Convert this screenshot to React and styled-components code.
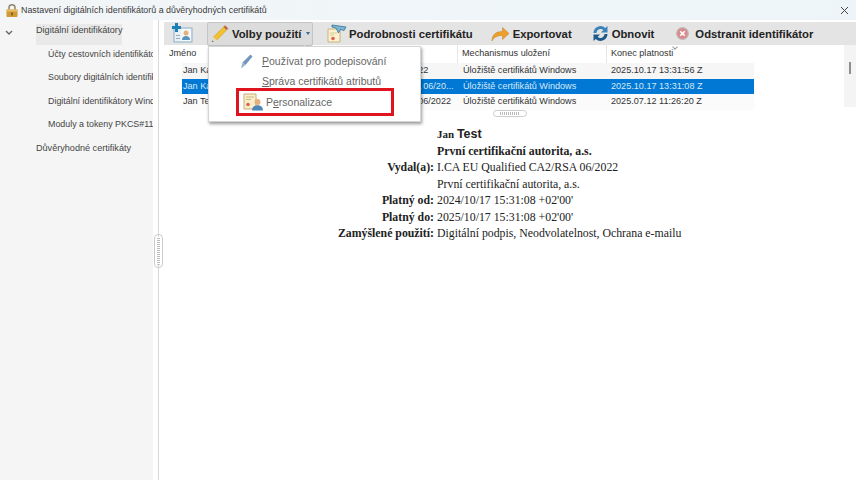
import React from 'react';
import styled, { createGlobalStyle } from 'styled-components';

const rows = [
  { name: 'Jan Kadlec', issuer: 'I.CA Qualified CA2/RSA 2022', store: 'Úložiště certifikátů Windows', end: '2025.10.17 13:31:56 Z', tone: '#f6f6f6' },
  { name: 'Jan Kadlec', issuer: 'I.CA EU Qualified CA2/RSA 06/20...', store: 'Úložiště certifikátů Windows', end: '2025.10.17 13:31:08 Z', selected: true },
  { name: 'Jan Test', issuer: 'I.CA EU Qualified CA/RSA 06/2022', store: 'Úložiště certifikátů Windows', end: '2025.07.12 11:26:20 Z', tone: '#fbfbfb' },
];

const details = [
  { label: 'Vydal(a):', value: 'I.CA EU Qualified CA2/RSA 06/2022' },
  { label: '', value: 'První certifikační autorita, a.s.' },
  { label: 'Platný od:', value: "2024/10/17 15:31:08 +02'00'" },
  { label: 'Platný do:', value: "2025/10/17 15:31:08 +02'00'" },
  { label: 'Zamýšlené použití:', value: 'Digitální podpis, Neodvolatelnost, Ochrana e-mailu' },
];

const App = () => (
  <>
    <GlobalStyle />
    <Page>
      <TitleBar>
        <LockIcon />
        <TitleText>Nastavení digitálních identifikátorů a důvěryhodných certifikátů</TitleText>
        <CloseIcon />
      </TitleBar>
      <Body>
        <Sidebar>
          <Chevron />
          <TreeItem $selected>Digitální identifikátory</TreeItem>
          <TreeItem $child>Účty cestovních identifikátorů</TreeItem>
          <TreeItem $child>Soubory digitálních identifikátorů</TreeItem>
          <TreeItem $child>Digitální identifikátory Windows</TreeItem>
          <TreeItem $child>Moduly a tokeny PKCS#11</TreeItem>
          <TreeItem>Důvěryhodné certifikáty</TreeItem>
        </Sidebar>
        <Splitter>
          <SplitterGrip />
        </Splitter>
        <Main>
          <Toolbar>
            <AddButton><AddIdIcon /></AddButton>
            <OptionsButton>
              <PencilIcon />
              <span>Volby použití</span>
              <Caret />
            </OptionsButton>
            <ToolButton $left={14} $gap={2}><CertIcon />Podrobnosti certifikátu</ToolButton>
            <ToolButton $left={18} $gap={3}><ExportIcon />Exportovat</ToolButton>
            <ToolButton $left={20} $gap={3}><RefreshIcon />Obnovit</ToolButton>
            <ToolButton $left={22} $gap={6}><RemoveIcon />Odstranit identifikátor</ToolButton>
          </Toolbar>
          <TableArea>
            <Table>
              <HeaderRow>
                <NameHead>Jméno</NameHead>
                <HeadCell />
                <HeadCell>Mechanismus uložení</HeadCell>
                <HeadCell>Konec platnosti<SortMark /></HeadCell>
              </HeaderRow>
              {rows.map((row, index) => (
                <Row key={index} $selected={row.selected} $tone={row.tone}>
                  <Cell>{row.name}</Cell>
                  <Cell>{row.issuer}</Cell>
                  <Cell>{row.store}</Cell>
                  <Cell>{row.end}</Cell>
                </Row>
              ))}
              <RowGrip />
            </Table>
            <ScrollTrack><ScrollThumb /></ScrollTrack>
          </TableArea>
          <Detail>
            <DetailRow>
              <span />
              <NameLine>Jan <strong>Test</strong></NameLine>
            </DetailRow>
            <DetailRow>
              <span />
              <b>První certifikační autorita, a.s.</b>
            </DetailRow>
            {details.map((item, index) => (
              <DetailRow key={index}>
                <b>{item.label}</b>
                <span>{item.value}</span>
              </DetailRow>
            ))}
          </Detail>
          <Menu>
            <MenuItem>
              <BrushIcon />
              <span><u>P</u>oužívat pro podepisování</span>
            </MenuItem>
            <MenuItem>
              <MenuSpacer />
              <span><u>S</u>práva certifikátů atributů</span>
            </MenuItem>
            <PersonalItem>
              <PersonIcon />
              <span>P<u>e</u>rsonalizace</span>
            </PersonalItem>
          </Menu>
        </Main>
      </Body>
    </Page>
  </>
);

const LockIcon = () => (
  <svg width="12" height="13" viewBox="0 0 12 13">
    <path d="M3 6V3.800a3 3 0 0 1 6 0V6" fill="none" stroke="#8f8468" strokeWidth="1.500" />
    <rect x="0.500" y="5.500" width="11" height="7.500" rx="0.800" fill="#cf9a35" />
    <rect x="0.500" y="5.500" width="11" height="2" fill="#e9c068" />
    <rect x="5.200" y="8.500" width="1.600" height="2.800" fill="#7a5312" />
  </svg>
);

const CloseIcon = () => (
  <CloseSvg width="9" height="9" viewBox="0 0 9 9">
    <path d="M1 1l7 7M8 1l-7 7" stroke="#444" strokeWidth="1" fill="none" />
  </CloseSvg>
);

const Chevron = () => (
  <ChevronSvg width="8" height="6" viewBox="0 0 8 6">
    <path d="M1 1l3 3 3-3" stroke="#666" strokeWidth="1.400" fill="none" />
  </ChevronSvg>
);

const AddIdIcon = () => (
  <svg width="22" height="20" viewBox="0 0 22 20">
    <rect x="3" y="5" width="18" height="14" fill="#e6f0f6" stroke="#8fb0c6" />
    <rect x="5" y="12" width="4" height="1" fill="#9ab" />
    <rect x="5" y="15" width="4" height="1" fill="#9ab" />
    <rect x="10" y="6" width="10" height="12" fill="#f4f8fa" />
    <circle cx="15" cy="10" r="2.500" fill="#e5b27a" />
    <path d="M11 17c0-3 1.800-4 4-4s4 1 4 4z" fill="#5a93c0" />
    <path d="M4 0h3v3h3v3H7v3H4V6H1V3h3z" fill="#1d7fb8" />
  </svg>
);

const PencilIcon = () => (
  <svg width="18" height="19" viewBox="0 0 18 19">
    <path d="M14 1.500l3 3L6 16l-3.500-3z" fill="#f2c230" stroke="#c4951f" strokeWidth="0.500" />
    <path d="M14 1.500l3 3-1.500 1.500-3-3z" fill="#b9655a" />
    <path d="M2.500 13L6 16l-5 2z" fill="#ecd9b2" />
    <path d="M1 18l1.600-.6-1-1z" fill="#333" />
  </svg>
);

const CertIcon = () => (
  <svg width="20" height="19" viewBox="0 0 20 19">
    <path d="M1 5h12v13H1z" fill="#fbf1cf" stroke="#cbb37c" />
    <path d="M3 9h7M3 11h4" stroke="#d8c696" />
    <circle cx="6" cy="14.500" r="1.800" fill="#d9634a" />
    <path d="M5 1l14 2-2 3.500-3.500-1.200L11.500 9 9 4 5 3z" fill="#82b7d3" stroke="#2f7199" strokeWidth="0.800" />
  </svg>
);

const ExportIcon = () => (
  <svg width="19" height="16" viewBox="0 0 19 16">
    <path d="M1 15C1 8.500 5 5.500 11.500 5.500V1.500L18 7.500l-6.500 6V9.500C6.500 9.500 3 11 1 15z" fill="#eca02c" stroke="#c07f1c" strokeWidth="0.500" />
  </svg>
);

const RefreshIcon = () => (
  <svg width="17" height="17" viewBox="0 0 17 17">
    <path d="M1.500 8a7 7 0 0 1 11.800-5L15.500 1v6.500H9l2.400-2.400A4.200 4.200 0 0 0 4.400 8z" fill="#3a84ba" />
    <path d="M15.500 9a7 7 0 0 1-11.800 5L1.500 16V9.500H8l-2.400 2.400A4.200 4.200 0 0 0 12.600 9z" fill="#1c5a8c" />
  </svg>
);

const RemoveIcon = () => (
  <svg width="13" height="13" viewBox="0 0 13 13">
    <circle cx="6.500" cy="6.500" r="5.800" fill="#d98a8f" stroke="#bdb5b5" strokeWidth="1.200" />
    <path d="M4.200 4.200l4.600 4.600M8.800 4.200l-4.600 4.600" stroke="#fff" strokeWidth="1.600" />
  </svg>
);

const BrushIcon = () => (
  <svg width="13" height="15" viewBox="0 0 13 15">
    <path d="M10.500 0.500l2 2L5.500 11 2.500 8.500z" fill="#6f97bd" />
    <path d="M2.500 8.500l3 2.500L1 14.500z" fill="#93b2cd" />
  </svg>
);

const PersonIcon = () => (
  <svg width="21" height="18" viewBox="0 0 21 18">
    <path d="M1 1h12v15H1z" fill="#f8efca" stroke="#c6ad74" />
    <path d="M3 4h8M3 6.500h5" stroke="#cbb682" />
    <circle cx="5" cy="11.500" r="1.800" fill="#d9634a" />
    <circle cx="14.500" cy="9" r="3" fill="#e6b07c" />
    <path d="M9 17.500c0-3.500 2.500-5.200 5.500-5.200s5.500 1.700 5.500 5.200z" fill="#4d87b8" />
  </svg>
);

const GlobalStyle = createGlobalStyle`
  html, body {
    margin: 0;
    padding: 0;
    background: #fff;
    overflow: hidden;
  }
`;

const Page = styled.div`
  width: 856px;
  height: 480px;
  display: flex;
  flex-direction: column;
  font-family: "Liberation Sans", Arial, sans-serif;
  color: #333;
  background: #fff;
  overflow: hidden;
`;

const TitleBar = styled.div`
  height: 20px;
  flex: none;
  display: flex;
  align-items: center;
  gap: 3px;
  padding: 0 6px;
  background: linear-gradient(90deg, #f3f5f6 0%, #eff6fa 60%, #edf5f8 100%);
`;

const TitleText = styled.div`
  font-size: 8.900px;
  color: #3a3a3a;
  flex: 1;
`;

const CloseSvg = styled.svg`
  margin-right: 1px;
`;

const Body = styled.div`
  flex: 1;
  display: flex;
  min-height: 0;
`;

const Sidebar = styled.div`
  position: relative;
  width: 153px;
  flex: none;
  box-sizing: border-box;
  padding: 4px 0 0 36px;
  background: #f5f5f5;
  display: flex;
  flex-direction: column;
  gap: 2.600px;
  overflow: hidden;
`;

const ChevronSvg = styled.svg`
  position: absolute;
  left: 5px;
  top: 10px;
`;

const TreeItem = styled.div`
  height: 21px;
  line-height: 12px;
  font-size: ${props => (props.$child ? '8.900px' : '9.100px')};
  white-space: nowrap;
  color: #444;
  flex: none;
  margin-left: ${props => (props.$child ? '12px' : '0')};
  width: ${props => (props.$selected ? '86px' : 'auto')};
  background: ${props => (props.$selected ? '#e9e9e9' : 'transparent')};
`;

const Splitter = styled.div`
  position: relative;
  width: 11px;
  flex: none;
  box-sizing: border-box;
  margin-left: 5px;
  margin-right: -5px;
  border-left: 1px solid #d9d9d9;
`;

const SplitterGrip = styled.div`
  position: absolute;
  left: -5px;
  top: 214px;
  width: 9px;
  height: 34px;
  box-sizing: border-box;
  padding: 2px;
  border: 1px solid #ccc;
  border-radius: 4px;
  background: repeating-linear-gradient(0deg, #bbb 0 1px, #fff 1px 2px);
  background-clip: content-box;
  background-color: #fff;
`;

const Main = styled.div`
  position: relative;
  flex: 1;
  min-width: 0;
  display: flex;
  flex-direction: column;
`;

const Toolbar = styled.div`
  height: 23px;
  flex: none;
  margin-top: 2px;
  display: flex;
  align-items: center;
  background: #e4e4e4;
  font-size: 11.300px;
  font-weight: bold;
  color: #222;

  svg {
    flex: none;
  }
`;

const AddButton = styled.div`
  width: 43px;
  padding-left: 7px;
  box-sizing: border-box;
  display: flex;
  align-items: center;
  margin-top: -2px;
`;

const OptionsButton = styled.div`
  width: 106px;
  height: 24px;
  box-sizing: border-box;
  display: flex;
  align-items: center;
  gap: 3px;
  padding: 0 3px;
  border: 1px solid #c4c4c4;
  border-radius: 2px;
  background: #dcdcdc;
  white-space: nowrap;
`;

const Caret = styled.i`
  width: 0;
  height: 0;
  margin-left: 2px;
  border-left: 2px solid transparent;
  border-right: 2px solid transparent;
  border-top: 3px solid #356a94;
`;

const ToolButton = styled.div`
  display: flex;
  align-items: center;
  gap: ${props => props.$gap}px;
  margin-left: ${props => props.$left}px;
  white-space: nowrap;
`;

const TableArea = styled.div`
  position: relative;
  height: 66px;
  flex: none;
  display: flex;
`;

const Table = styled.div`
  position: relative;
  width: 590px;
  flex: none;
  font-size: 9.100px;
  color: #333;
`;

const HeaderRow = styled.div`
  display: grid;
  grid-template-columns: 140px 153px 149px 148px;
  height: 18px;
  line-height: 16px;
`;

const Row = styled.div`
  display: grid;
  grid-template-columns: 126px 154px 148px 144px;
  margin-left: 18px;
  height: 15.500px;
  line-height: 15.500px;
  background: ${props => (props.$selected ? '#0078d4' : props.$tone)};
  color: ${props => (props.$selected ? '#d6e9f8' : '#333')};
`;

const Cell = styled.div`
  position: relative;
  padding-left: 1px;
  white-space: nowrap;
  overflow: hidden;
`;

const HeadCell = styled.div`
  position: relative;
  padding-left: 4px;
  border-left: 1px solid #e6e6e6;
  white-space: nowrap;
`;

const NameHead = styled.div`
  padding-left: 5px;
`;

const SortMark = styled.i`
  position: absolute;
  left: 66px;
  top: 0;
  width: 3px;
  height: 3px;
  border-right: 1px solid #999;
  border-bottom: 1px solid #999;
  transform: rotate(45deg);
`;

const RowGrip = styled.div`
  position: absolute;
  left: 329px;
  top: 65px;
  width: 34px;
  height: 7px;
  box-sizing: border-box;
  padding: 1px 6px;
  border: 1px solid #ccc;
  border-radius: 4px;
  background: repeating-linear-gradient(90deg, #bbb 0 1px, #fff 1px 2px);
  background-clip: content-box;
`;

const ScrollTrack = styled.div`
  position: absolute;
  right: 0;
  top: 0;
  bottom: 4px;
  width: 12px;
  background: #f4f4f4;
`;

const ScrollThumb = styled.div`
  margin: 17px 0 0 5px;
  width: 2px;
  height: 12px;
  background: #8f8f8f;
`;

const Detail = styled.div`
  flex: 1;
  padding-top: 15px;
  font-family: "Liberation Serif", "Times New Roman", serif;
  font-size: 11.800px;
  color: #222;
`;

const DetailRow = styled.div`
  display: grid;
  grid-template-columns: 270px 1fr;
  column-gap: 3px;
  height: 16.500px;
  line-height: 16.500px;
  white-space: nowrap;

  & > b:first-child {
    text-align: right;
  }
`;

const NameLine = styled.b`
  font-size: 11px;

  strong {
    font-family: "Liberation Sans", Arial, sans-serif;
    font-size: 12.500px;
  }
`;

const Menu = styled.div`
  position: absolute;
  left: 44px;
  top: 26px;
  width: 213px;
  height: 76px;
  box-sizing: border-box;
  padding-top: 4px;
  background: #fff;
  border: 1px solid #d5d5d5;
  box-shadow: 1px 2px 3px rgba(0, 0, 0, 0.4);
  font-size: 10.500px;
  color: #666;
`;

const MenuItem = styled.div`
  height: 20px;
  display: flex;
  align-items: center;
  padding-left: 31px;
  gap: 9px;
  white-space: nowrap;
`;

const MenuSpacer = styled.i`
  width: 13px;
`;

const PersonalItem = styled.div`
  width: 158px;
  height: 28px;
  margin: -3px 0 0 27px;
  box-sizing: border-box;
  border: 3px solid #e0141f;
  display: flex;
  align-items: center;
  gap: 2px;
  padding-left: 4px;
  white-space: nowrap;
`;

export default App;
